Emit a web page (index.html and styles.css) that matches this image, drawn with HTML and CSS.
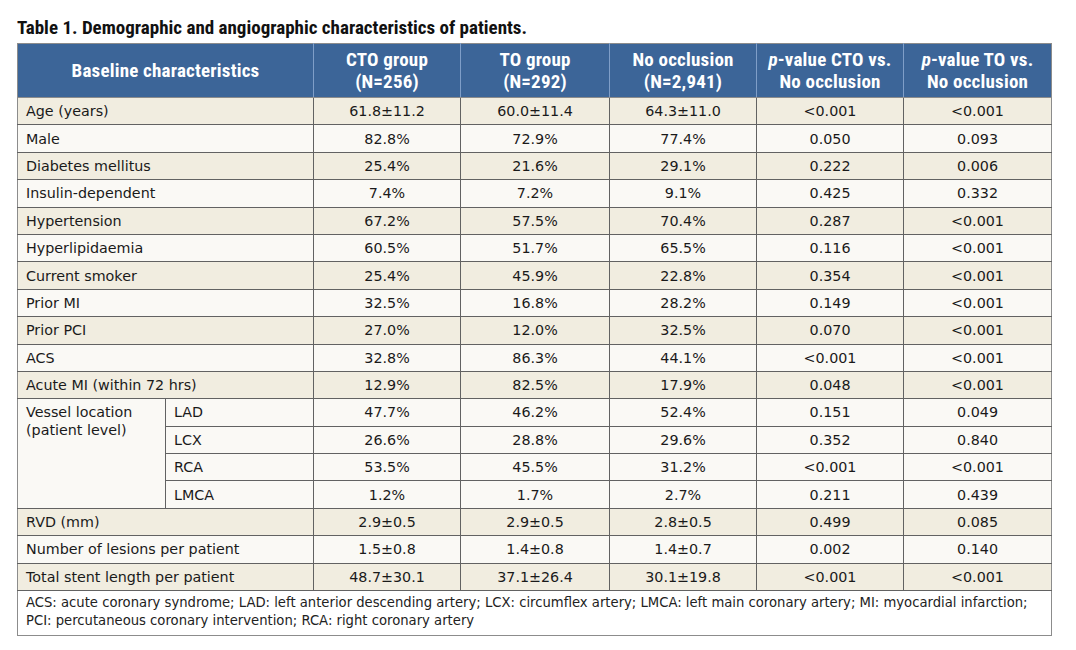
FILE: index.html
```html
<!DOCTYPE html>
<html lang="en">
<head>
<meta charset="utf-8">
<title>Table 1</title>
<link rel="stylesheet" href="styles.css">
</head>
<body>
<div class="page">
  <h1 class="caption">Table 1. Demographic and angiographic characteristics of patients.</h1>
  <table class="data">
    <colgroup>
      <col class="c-lab1"><col class="c-lab2"><col class="c-num"><col class="c-num2"><col class="c-num"><col class="c-num"><col class="c-last">
    </colgroup>
    <thead>
      <tr>
        <th colspan="2">Baseline characteristics</th>
        <th>CTO group<br>(N=256)</th>
        <th>TO group<br>(N=292)</th>
        <th>No occlusion<br>(N=2,941)</th>
        <th><i>p</i>-value CTO vs.<br>No occlusion</th>
        <th><i>p</i>-value TO vs.<br>No occlusion</th>
      </tr>
    </thead>
    <tbody>
      <tr class="odd"><td colspan="2" class="lab">Age (years)</td><td>61.8±11.2</td><td>60.0±11.4</td><td>64.3±11.0</td><td>&lt;0.001</td><td>&lt;0.001</td></tr>
      <tr class="even"><td colspan="2" class="lab">Male</td><td>82.8%</td><td>72.9%</td><td>77.4%</td><td>0.050</td><td>0.093</td></tr>
      <tr class="odd"><td colspan="2" class="lab">Diabetes mellitus</td><td>25.4%</td><td>21.6%</td><td>29.1%</td><td>0.222</td><td>0.006</td></tr>
      <tr class="even"><td colspan="2" class="lab">Insulin-dependent</td><td>7.4%</td><td>7.2%</td><td>9.1%</td><td>0.425</td><td>0.332</td></tr>
      <tr class="odd"><td colspan="2" class="lab">Hypertension</td><td>67.2%</td><td>57.5%</td><td>70.4%</td><td>0.287</td><td>&lt;0.001</td></tr>
      <tr class="even"><td colspan="2" class="lab">Hyperlipidaemia</td><td>60.5%</td><td>51.7%</td><td>65.5%</td><td>0.116</td><td>&lt;0.001</td></tr>
      <tr class="odd"><td colspan="2" class="lab">Current smoker</td><td>25.4%</td><td>45.9%</td><td>22.8%</td><td>0.354</td><td>&lt;0.001</td></tr>
      <tr class="even"><td colspan="2" class="lab">Prior MI</td><td>32.5%</td><td>16.8%</td><td>28.2%</td><td>0.149</td><td>&lt;0.001</td></tr>
      <tr class="odd"><td colspan="2" class="lab">Prior PCI</td><td>27.0%</td><td>12.0%</td><td>32.5%</td><td>0.070</td><td>&lt;0.001</td></tr>
      <tr class="even"><td colspan="2" class="lab">ACS</td><td>32.8%</td><td>86.3%</td><td>44.1%</td><td>&lt;0.001</td><td>&lt;0.001</td></tr>
      <tr class="odd"><td colspan="2" class="lab">Acute MI (within 72 hrs)</td><td>12.9%</td><td>82.5%</td><td>17.9%</td><td>0.048</td><td>&lt;0.001</td></tr>
      <tr class="even"><td rowspan="4" class="lab group">Vessel location<br>(patient level)</td><td class="lab">LAD</td><td>47.7%</td><td>46.2%</td><td>52.4%</td><td>0.151</td><td>0.049</td></tr>
      <tr class="even"><td class="lab">LCX</td><td>26.6%</td><td>28.8%</td><td>29.6%</td><td>0.352</td><td>0.840</td></tr>
      <tr class="even"><td class="lab">RCA</td><td>53.5%</td><td>45.5%</td><td>31.2%</td><td>&lt;0.001</td><td>&lt;0.001</td></tr>
      <tr class="even"><td class="lab">LMCA</td><td>1.2%</td><td>1.7%</td><td>2.7%</td><td>0.211</td><td>0.439</td></tr>
      <tr class="odd"><td colspan="2" class="lab">RVD (mm)</td><td>2.9±0.5</td><td>2.9±0.5</td><td>2.8±0.5</td><td>0.499</td><td>0.085</td></tr>
      <tr class="even"><td colspan="2" class="lab">Number of lesions per patient</td><td>1.5±0.8</td><td>1.4±0.8</td><td>1.4±0.7</td><td>0.002</td><td>0.140</td></tr>
      <tr class="odd"><td colspan="2" class="lab">Total stent length per patient</td><td>48.7±30.1</td><td>37.1±26.4</td><td>30.1±19.8</td><td>&lt;0.001</td><td>&lt;0.001</td></tr>
    </tbody>
    <tfoot>
      <tr><td colspan="7" class="note">ACS: acute coronary syndrome; LAD: left anterior descending artery; LCX: circumflex artery; LMCA: left main coronary artery; MI: myocardial infarction;<br>PCI: percutaneous coronary intervention; RCA: right coronary artery</td></tr>
    </tfoot>
  </table>
</div>
</body>
</html>
```

FILE: styles.css
```css
html, body {
  margin: 0;
  padding: 0;
  background: #ffffff;
}

.page {
  padding: 17px 0 0 17px;
}

.caption {
  margin: 0 0 4px 0;
  font-family: "Roboto", sans-serif;
  font-stretch: 75%;
  font-weight: bold;
  font-size: 19px;
  line-height: 22px;
  color: #111111;
  white-space: nowrap;
}

.data {
  border-collapse: collapse;
  table-layout: fixed;
  width: 1035px;
  font-family: "DejaVu Sans", "Liberation Sans", sans-serif;
  font-size: 14.3px;
  color: #1a1a1a;
  border: 1px solid #8c8c8c;
}

.c-lab1 { width: 148px; }
.c-lab2 { width: 148px; }
.c-num { width: 147px; }
.c-num2 { width: 149px; }
.c-last { width: 148px; }

.data thead th {
  background: #3c6598;
  color: #ffffff;
  font-family: "Roboto", sans-serif;
  font-stretch: 75%;
  font-weight: bold;
  font-size: 19px;
  line-height: 22px;
  letter-spacing: 0.2px;
  height: 53px;
  padding: 0 2px;
  text-align: center;
  vertical-align: middle;
  white-space: nowrap;
  border: 1px solid #8c8c8c;
  border-left-color: #7f9ec8;
  border-right-color: #7f9ec8;
}

.data thead th:first-child {
  border-left-color: #8c8c8c;
}

.data thead th:last-child {
  border-right-color: #8c8c8c;
}

.data tbody td {
  height: 26.4px;
  padding: 0 6px;
  text-align: center;
  vertical-align: middle;
  line-height: 18px;
  border: 1px solid #626262;
  white-space: nowrap;
}

.data tbody td.lab {
  text-align: left;
  padding-left: 8px;
}

.data tbody td.group {
  vertical-align: top;
  padding-top: 4px;
  line-height: 18px;
}

.data tbody tr.odd td {
  background: #f1ede0;
}

.data tbody tr.even td {
  background: #faf9f5;
}

.data tbody tr:first-child td {
  border-top-color: #8c8c8c;
}

.data tbody td:first-child {
  border-left-color: #8c8c8c;
}

.data tbody td:last-child {
  border-right-color: #8c8c8c;
}

.data tfoot td.note {
  background: #ffffff;
  border: 1px solid #8c8c8c;
  border-top-color: #626262;
  padding: 3px 8px 5px 8px;
  font-size: 13.2px;
  line-height: 18px;
  color: #222222;
  text-align: left;
}
```
